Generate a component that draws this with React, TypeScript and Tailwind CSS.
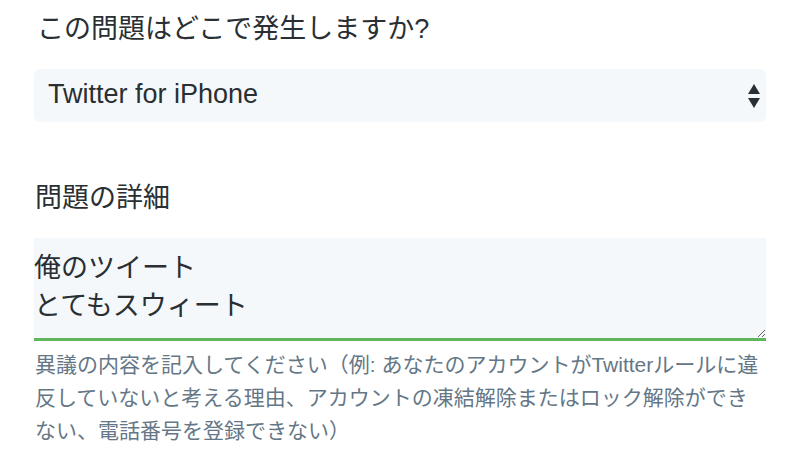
import React from "react";

const font = { fontFamily: '"Liberation Sans", "Noto Sans CJK JP", sans-serif' };

export default function App() {
  return (
    <div
      className="w-[800px] h-[450px] bg-white overflow-hidden px-[34px] font-['Liberation_Sans','Noto_Sans_CJK_JP',sans-serif]"
      style={font}
    >
      <div className="pl-[3px] pt-[9px] text-[27px] leading-[40px] text-[#292f33] whitespace-nowrap">
        この問題はどこで発生しますか?
      </div>

      <div className="mt-[20px] h-[53px] rounded-md bg-[#f5f8fa] flex items-center justify-between pl-[14px] pr-[6px]">
        <span className="text-[27px] leading-[32px] text-[#292f33] -mt-[3px]">Twitter for iPhone</span>
        <svg width="12" height="26" viewBox="0 0 12 26">
          <polygon points="6,1 12,11 0,11" fill="#292f33" />
          <polygon points="0,15 12,15 6,25" fill="#292f33" />
        </svg>
      </div>

      <div className="mt-[56px] pl-[1px] text-[27px] leading-[40px] text-[#292f33] whitespace-nowrap">
        問題の詳細
      </div>

      <textarea
        readOnly
        className="mt-[20px] block w-full h-[103px] rounded-none bg-[#f5f8fa] border-0 border-b-[3px] border-[#5fb65c] pt-[11px] px-0 text-[27px] leading-[38px] text-[#292f33] outline-none"
        defaultValue={"俺のツイート\nとてもスウィート"}
      />

      <div className="mt-[7px] pl-[1px] text-[21px] leading-[33px] text-[#657786] whitespace-nowrap">
        <div>異議の内容を記入してください（例: あなたのアカウントがTwitterルールに違</div>
        <div>反していないと考える理由、アカウントの凍結解除またはロック解除ができ</div>
        <div>ない、電話番号を登録できない）</div>
      </div>
    </div>
  );
}
